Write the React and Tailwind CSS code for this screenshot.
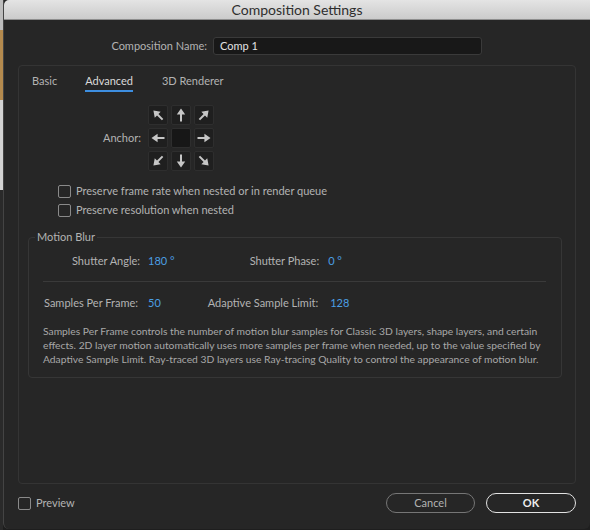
import React from 'react';

const font = { fontFamily: 'Lato, "Open Sans", "Liberation Sans", sans-serif' };

function Arrow({ dir }) {
  const rot = { n: 0, ne: 45, e: 90, se: 135, s: 180, sw: 225, w: 270, nw: 315 }[dir];
  return (
    <svg width="16" height="16" viewBox="0 0 16 16" style={{ transform: `rotate(${rot}deg)` }}>
      <path d="M8 1.5 L12.2 7.6 H9 V14.5 H7 V7.6 H3.8 Z" fill="#c6c6c6" />
    </svg>
  );
}

function Cell({ dir }) {
  return (
    <div
      className={`flex h-[20px] w-[20px] items-center justify-center rounded-[2px] border border-[#2e2e2e] ${
        dir ? 'bg-[#1f1f1f]' : 'bg-[#171717]'
      }`}
    >
      {dir && <Arrow dir={dir} />}
    </div>
  );
}

function Checkbox({ label }) {
  return (
    <div className="flex h-[14px] items-center gap-[5px]">
      <div className="h-[13px] w-[13px] rounded-[2px] border-[1.5px] border-[#8a8a8a]" />
      <span className="text-[11px] leading-[14px] text-[#b3b3b3]">{label}</span>
    </div>
  );
}

export default function App() {
  return (
    <div className="flex h-[530px] w-[590px] bg-[#1e1e1e]" style={font}>
      <div className="flex w-[3px] flex-col">
        <div className="h-[30px] bg-[#bdbdbd]" />
        <div className="h-[70px] bg-[#b48a4e]" />
        <div className="h-[90px] bg-[#d3d3d3]" />
        <div className="flex-1 bg-[#2a2a2a]" />
      </div>
      <div className="flex h-[529px] flex-1 flex-col overflow-hidden rounded-b-[6px] border-l border-[#444] bg-[#262626]">
        <div className="flex h-[20px] shrink-0 items-center justify-center rounded-tl-[5px] border-b border-[#8e8e8e] bg-gradient-to-b from-[#e4e4e4] to-[#cbcbcb]">
          <span className="text-[14px] leading-[18px] text-[#2e2e2e]">Composition Settings</span>
        </div>

        <div className="mt-[17px] flex h-[18px] items-center">
          <div className="w-[203px] text-right text-[11px] text-[#b3b3b3]">Composition Name:</div>
          <div className="ml-[6px] flex h-[18px] w-[269px] items-center rounded-[3px] border border-[#3a3a3a] bg-[#181818] px-[6px] text-[11px] text-[#e2e2e2]">
            Comp 1
          </div>
        </div>

        <div className="ml-[14px] mr-[14px] mt-[10px] flex h-[419px] flex-col rounded-[4px] border border-[#343434]">
          <div className="mt-[8px] flex items-start text-[11px] leading-[14px] text-[#b3b3b3]">
            <span className="ml-[13px]">Basic</span>
            <div className="ml-[28px] flex flex-col">
              <span className="text-[#dadada]">Advanced</span>
              <div className="mt-[2px] h-[2px] bg-[#3d8ee0]" />
            </div>
            <span className="ml-[29px]">3D Renderer</span>
          </div>

          <div className="mt-[13px] flex items-center">
            <div className="w-[122px] text-right text-[11px] text-[#b3b3b3]">Anchor:</div>
            <div className="ml-[7px] grid grid-cols-[20px_20px_20px] gap-[3px]">
              <Cell dir="nw" />
              <Cell dir="n" />
              <Cell dir="ne" />
              <Cell dir="w" />
              <Cell />
              <Cell dir="e" />
              <Cell dir="sw" />
              <Cell dir="s" />
              <Cell dir="se" />
            </div>
          </div>

          <div className="ml-[39px] mt-[13px] flex flex-col gap-[5px]">
            <Checkbox label="Preserve frame rate when nested or in render queue" />
            <Checkbox label="Preserve resolution when nested" />
          </div>

          <div className="relative ml-[9px] mr-[13px] mt-[20px] h-[141px] shrink-0 rounded-[4px] border border-[#363636]">
            <span className="absolute -top-[8px] left-[6px] bg-[#262626] px-[2px] text-[11px] leading-[14px] text-[#b3b3b3]">
              Motion Blur
            </span>
            <div className="mt-[15px] flex h-[16px] items-center text-[11px]">
              <span className="ml-[43px] text-[#b3b3b3]">Shutter Angle:</span>
              <span className="ml-[8px] text-[#4b9fe3]">180 °</span>
              <span className="ml-[75px] text-[#b3b3b3]">Shutter Phase:</span>
              <span className="ml-[9px] text-[#4b9fe3]">0 °</span>
            </div>
            <div className="ml-[14px] mr-[15px] mt-[12px] h-px bg-[#3a3a3a]" />
            <div className="mt-[13px] flex h-[16px] items-center text-[11px]">
              <span className="ml-[15px] text-[#b3b3b3]">Samples Per Frame:</span>
              <span className="ml-[10px] text-[#4b9fe3]">50</span>
              <span className="ml-[47px] text-[#b3b3b3]">Adaptive Sample Limit:</span>
              <span className="ml-[12px] text-[#4b9fe3]">128</span>
            </div>
            <p className="ml-[14px] mt-[13px] whitespace-nowrap text-[10.3px] leading-[14px] text-[#a8a8a8]">
              Samples Per Frame controls the number of motion blur samples for Classic 3D layers, shape layers, and certain
              <br />
              effects. 2D layer motion automatically uses more samples per frame when needed, up to the value specified by
              <br />
              Adaptive Sample Limit. Ray-traced 3D layers use Ray-tracing Quality to control the appearance of motion blur.
            </p>
          </div>
        </div>

        <div className="mt-[9px] flex h-[20px] items-center">
          <div className="ml-[14px]">
            <Checkbox label="Preview" />
          </div>
          <div className="ml-auto mr-[14px] flex gap-[11px]">
            <button className="h-[20px] w-[89px] rounded-full border-[1.5px] border-[#767676] text-[11px] text-[#b3b3b3]">
              Cancel
            </button>
            <button className="h-[20px] w-[90px] rounded-full border-[1.5px] border-[#e2e2e2] text-[11px] font-bold text-[#ededed]">
              OK
            </button>
          </div>
        </div>
      </div>
    </div>
  );
}
